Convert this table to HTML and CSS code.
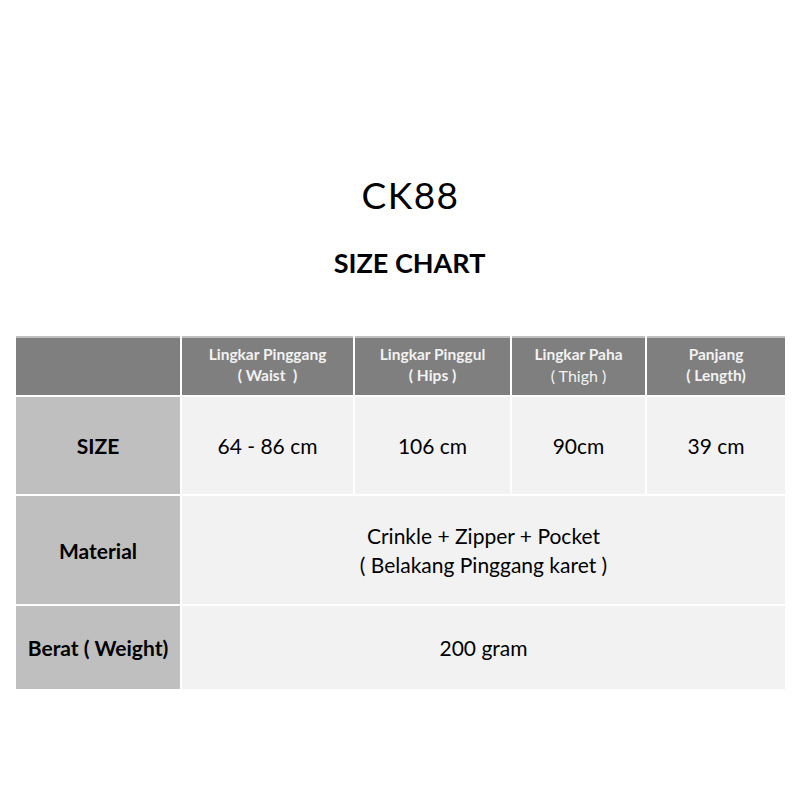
FILE: index.html
```html
<!DOCTYPE html>
<html lang="id">
<head>
<meta charset="utf-8">
<title>CK88 Size Chart</title>
<link rel="stylesheet" href="styles.css">
</head>
<body>
<main class="page">
  <h1 class="brand">CK88</h1>
  <h2 class="subtitle">SIZE CHART</h2>
  <div class="chart">
    <div class="cell head corner"></div>
    <div class="cell head"><span>Lingkar Pinggang</span><span>( Waist&nbsp; )</span></div>
    <div class="cell head"><span>Lingkar Pinggul</span><span>( Hips )</span></div>
    <div class="cell head"><span>Lingkar Paha</span><span class="thin">( Thigh )</span></div>
    <div class="cell head"><span>Panjang</span><span>( Length)</span></div>

    <div class="cell label">SIZE</div>
    <div class="cell data">64 - 86 cm</div>
    <div class="cell data">106 cm</div>
    <div class="cell data">90cm</div>
    <div class="cell data">39 cm</div>

    <div class="cell label">Material</div>
    <div class="cell data wide"><span>Crinkle + Zipper + Pocket</span><span>( Belakang Pinggang karet )</span></div>

    <div class="cell label">Berat ( Weight)</div>
    <div class="cell data wide">200 gram</div>
  </div>
</main>
</body>
</html>
```

FILE: styles.css
```css
html, body {
  margin: 0;
  padding: 0;
  background: #ffffff;
}

.page {
  font-family: Lato, "Open Sans", sans-serif;
  color: #000000;
  padding: 175px 19px 0 16px;
  display: flex;
  flex-direction: column;
  align-items: stretch;
}

.brand {
  margin: 0;
  font-size: 37px;
  line-height: 40px;
  font-weight: 400;
  letter-spacing: 1.5px;
  text-align: center;
  padding-left: 20px;
}

.subtitle {
  margin: 33px 0 0;
  font-size: 27px;
  line-height: 30px;
  font-weight: 700;
  text-align: center;
  padding-left: 18px;
  letter-spacing: 0;
}

.chart {
  margin-top: 58px;
  display: grid;
  grid-template-columns: 164px 171px 155px 133px 138px;
  grid-template-rows: 59px 97px 108px 83px;
  gap: 2px;
  background: #ffffff;
}

.cell {
  display: flex;
  flex-direction: column;
  align-items: center;
  justify-content: center;
  text-align: center;
}

.head {
  background: #7f7f7f;
  border-top: 2px solid #bfbfbf;
  color: #f2f2f2;
  font-size: 15.5px;
  font-weight: 700;
  line-height: 21px;
  padding-bottom: 4px;
  box-sizing: border-box;
}

.head .thin {
  font-weight: 400;
  font-size: 16px;
}

.label {
  background: #bfbfbf;
  font-size: 21px;
  font-weight: 700;
}

.data {
  background: #f2f2f2;
  font-size: 21px;
  font-weight: 400;
  line-height: 29px;
}

.wide {
  grid-column: 2 / 6;
}
```
